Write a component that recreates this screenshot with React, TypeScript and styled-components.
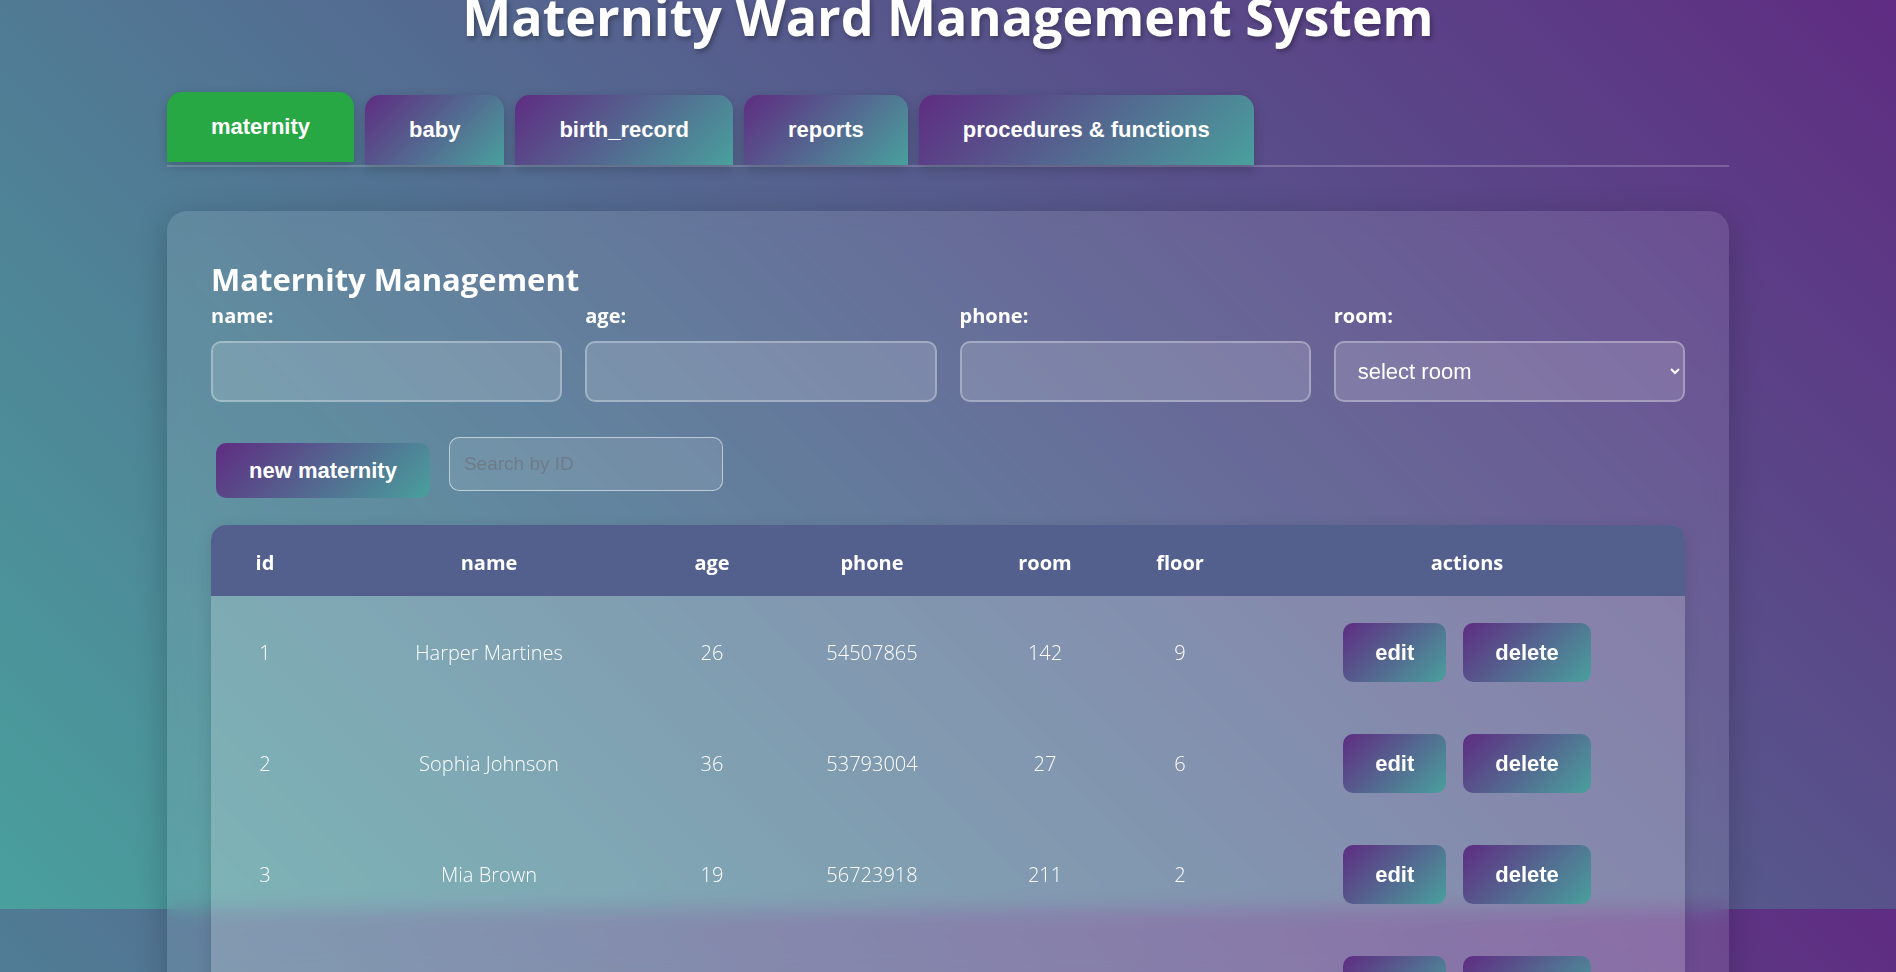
import React, { useState } from 'react';
import styled, { createGlobalStyle } from 'styled-components';

const GlobalStyle = createGlobalStyle`
  html {
    scrollbar-width: none;
  }
  html::-webkit-scrollbar {
    display: none;
  }
  body {
    margin: 0;
    font-family: "Open Sans", "Noto Sans", sans-serif;
    color: #fff;
    background: linear-gradient(45deg, #49a09d, #5f2c82);
    background-size: 100% 909px;
  }
  * {
    box-sizing: border-box;
  }
`;

const Page = styled.div`
  padding-bottom: 60px;
`;

const Title = styled.h1`
  margin: -10px 0 53px;
  font-size: 52px;
  line-height: 52px;
  font-weight: 700;
  text-align: center;
  color: #fff;
  text-shadow: 2px 3px 5px rgba(0, 0, 0, 0.3);
`;

const Wrapper = styled.div`
  max-width: 1562px;
  margin: 0 auto;
`;

const TabBar = styled.div`
  display: flex;
  align-items: flex-end;
  gap: 11px;
  border-bottom: 2px solid rgba(255, 255, 255, 0.2);
`;

const Tab = styled.button<{ $active?: boolean }>`
  height: 70px;
  padding: 0 44px;
  border: none;
  border-radius: 15px 15px 0 0;
  font-family: "Liberation Sans", Arial, sans-serif;
  font-size: 22px;
  font-weight: 700;
  color: #fff;
  cursor: pointer;
  background: ${(p) => (p.$active ? '#28a745' : 'linear-gradient(135deg, #5f2c82, #49a09d)')};
  transform: ${(p) => (p.$active ? 'translateY(-3px)' : 'none')};
  box-shadow: 0 4px 12px rgba(0, 0, 0, 0.2);
`;

const Card = styled.div`
  margin-top: 44px;
  padding: 44px;
  border-radius: 20px;
  background: rgba(255, 255, 255, 0.1);
  backdrop-filter: blur(10px);
  box-shadow: 0 8px 32px rgba(0, 0, 0, 0.22);
`;

const Heading = styled.h2`
  margin: 0;
  padding-top: 1px;
  font-size: 31px;
  line-height: 47px;
  font-weight: 700;
`;

const FormGrid = styled.div`
  display: grid;
  grid-template-columns: repeat(4, 1fr);
  gap: 23px;
`;

const Field = styled.div`
  display: flex;
  flex-direction: column;
`;

const Label = styled.label`
  font-size: 20px;
  line-height: 26px;
  font-weight: 700;
  margin-bottom: 12px;
`;

const Input = styled.input`
  height: 61px;
  padding: 0 20px;
  border: 2px solid rgba(255, 255, 255, 0.3);
  border-radius: 10px;
  background: rgba(255, 255, 255, 0.15);
  color: #fff;
  font-family: "Liberation Sans", Arial, sans-serif;
  font-size: 22px;
  outline: none;
`;

const Select = styled.select`
  height: 61px;
  padding: 0 12px 0 18px;
  border: 2px solid rgba(255, 255, 255, 0.3);
  border-radius: 10px;
  background: rgba(255, 255, 255, 0.15);
  color: #fff;
  font-family: "Liberation Sans", Arial, sans-serif;
  font-size: 22px;
  outline: none;

  option {
    color: #333;
  }
`;

const ActionRow = styled.div`
  display: flex;
  align-items: flex-start;
  margin-top: 35px;
`;

const GradientButton = styled.button`
  border: none;
  border-radius: 10px;
  background: linear-gradient(135deg, #5f2c82, #49a09d);
  color: #fff;
  font-family: "Liberation Sans", Arial, sans-serif;
  font-size: 22px;
  font-weight: 700;
  cursor: pointer;
`;

const NewButton = styled(GradientButton)`
  height: 55px;
  padding: 0 33px;
  margin: 6px 0 0 5px;
`;

const SearchInput = styled.input`
  width: 274px;
  height: 54px;
  margin-left: 19px;
  padding: 0 14px;
  border: 1px solid rgba(255, 255, 255, 0.55);
  border-radius: 10px;
  background: rgba(255, 255, 255, 0.1);
  color: #fff;
  font-family: "Liberation Sans", Arial, sans-serif;
  font-size: 19px;
  outline: none;

  &::placeholder {
    color: #6f7c88;
  }
`;

const TableWrap = styled.div`
  margin-top: 27px;
  border-radius: 15px;
  overflow: hidden;
  background: rgba(255, 255, 255, 0.2);
  box-shadow: 0 4px 16px rgba(0, 0, 0, 0.12);
`;

const Table = styled.table`
  width: 100%;
  border-collapse: collapse;
  table-layout: fixed;
`;

const Th = styled.th`
  height: 71px;
  padding: 3px 0 0;
  background: #535f8c;
  font-size: 20px;
  font-weight: 700;
  text-align: center;
`;

const Td = styled.td`
  height: 111px;
  padding: 2px 0 0;
  font-size: 20px;
  font-weight: 300;
  text-align: center;
`;

const RowButton = styled(GradientButton)<{ $gap?: boolean }>`
  height: 59px;
  padding: 0 32px;
  margin-left: ${(p) => (p.$gap ? '17px' : '0')};
  vertical-align: middle;
`;

const tabs = ['maternity', 'baby', 'birth_record', 'reports', 'procedures & functions'];

const columns = [
  { label: 'id', width: 108 },
  { label: 'name', width: 340 },
  { label: 'age', width: 106 },
  { label: 'phone', width: 214 },
  { label: 'room', width: 132 },
  { label: 'floor', width: 138 },
  { label: 'actions', width: 436 },
];

const mothers = [
  { id: 1, name: 'Harper Martines', age: 26, phone: '54507865', room: 142, floor: 9 },
  { id: 2, name: 'Sophia Johnson', age: 36, phone: '53793004', room: 27, floor: 6 },
  { id: 3, name: 'Mia Brown', age: 19, phone: '56723918', room: 211, floor: 2 },
  { id: 4, name: 'Olivia Davis', age: 29, phone: '52846137', room: 98, floor: 4 },
  { id: 5, name: 'Emma Wilson', age: 33, phone: '55018642', room: 163, floor: 7 },
];

const App: React.FC = () => {
  const [activeTab, setActiveTab] = useState('maternity');

  return (
    <Page>
      <GlobalStyle />
      <Title>Maternity Ward Management System</Title>
      <Wrapper>
        <TabBar>
          {tabs.map((t) => (
            <Tab key={t} $active={activeTab === t} onClick={() => setActiveTab(t)}>
              {t}
            </Tab>
          ))}
        </TabBar>

        <Card>
          <Heading>Maternity Management</Heading>
          <FormGrid>
            <Field>
              <Label>name:</Label>
              <Input type="text" />
            </Field>
            <Field>
              <Label>age:</Label>
              <Input type="number" />
            </Field>
            <Field>
              <Label>phone:</Label>
              <Input type="text" />
            </Field>
            <Field>
              <Label>room:</Label>
              <Select defaultValue="">
                <option value="">select room</option>
                <option value="142">142</option>
                <option value="27">27</option>
                <option value="211">211</option>
              </Select>
            </Field>
          </FormGrid>

          <ActionRow>
            <NewButton>new maternity</NewButton>
            <SearchInput type="text" placeholder="Search by ID" />
          </ActionRow>

          <TableWrap>
            <Table>
              <colgroup>
                {columns.map((c) => (
                  <col key={c.label} style={{ width: c.width }} />
                ))}
              </colgroup>
              <thead>
                <tr>
                  {columns.map((c) => (
                    <Th key={c.label}>{c.label}</Th>
                  ))}
                </tr>
              </thead>
              <tbody>
                {mothers.map((m) => (
                  <tr key={m.id}>
                    <Td>{m.id}</Td>
                    <Td>{m.name}</Td>
                    <Td>{m.age}</Td>
                    <Td>{m.phone}</Td>
                    <Td>{m.room}</Td>
                    <Td>{m.floor}</Td>
                    <Td>
                      <RowButton>edit</RowButton>
                      <RowButton $gap>delete</RowButton>
                    </Td>
                  </tr>
                ))}
              </tbody>
            </Table>
          </TableWrap>
        </Card>
      </Wrapper>
    </Page>
  );
};

export default App;
